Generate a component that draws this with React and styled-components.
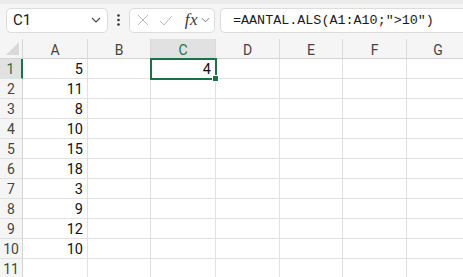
import React from "react";
import styled, { createGlobalStyle } from "styled-components";

const GlobalStyle = createGlobalStyle`
  html, body {
    margin: 0;
    padding: 0;
    background: #f5f5f5;
    overflow: hidden;
  }
  body {
    font-family: Roboto, "Liberation Sans", sans-serif;
  }
`;

const GREEN = "#1e7145";
const GRID = "#e1e1e1";

const columns = [
  { name: "A", width: 65 },
  { name: "B", width: 63 },
  { name: "C", width: 65 },
  { name: "D", width: 64 },
  { name: "E", width: 63 },
  { name: "F", width: 64 },
  { name: "G", width: 63 },
];

const values = [5, 11, 8, 10, 15, 18, 3, 9, 12, 10, null];

const Page = styled.div`
  width: 463px;
  height: 277px;
  overflow: hidden;
  display: flex;
  flex-direction: column;
`;

const TopStrip = styled.div`
  height: 4px;
  flex: none;
  background: #ebebeb;
`;

const FormulaBar = styled.div`
  display: flex;
  align-items: center;
  flex: none;
  height: 35px;
  padding: 0 0 3px 6px;
  box-sizing: border-box;
`;

const Box = styled.div`
  display: flex;
  align-items: center;
  height: 25px;
  box-sizing: border-box;
  background: #ffffff;
  border: 1px solid #dcdcdc;
  border-radius: 5px;
`;

const NameBox = styled(Box)`
  width: 102px;
  padding: 0 6px 0 6px;
  justify-content: space-between;
  font-family: Roboto, "Liberation Sans", sans-serif;
  font-size: 15px;
  color: #1b1b1b;
`;

const Dots = styled.div`
  width: 21px;
  display: flex;
  justify-content: center;
`;

const FxBox = styled(Box)`
  width: 86px;
  padding: 0 4px 0 7px;
`;

const FxLabel = styled.span`
  font-family: "Liberation Serif", serif;
  font-style: italic;
  font-size: 17px;
  color: #3a3a3a;
  margin-left: 12px;
  letter-spacing: 0.5px;
`;

const FxChevron = styled.span`
  display: flex;
  margin-left: 3px;
`;

const FormulaBox = styled(Box)`
  flex: 1;
  margin-left: 5px;
  border-right: none;
  border-radius: 5px 0 0 5px;
  padding-left: 12px;
  font-family: "Liberation Mono", monospace;
  font-size: 13.4px;
  color: #1b1b1b;
`;

const Grid = styled.div`
  display: flex;
  flex-direction: column;
  background: #ffffff;
`;

const Row = styled.div`
  display: flex;
  flex: none;
  height: ${(p) => p.$h}px;
`;

const Corner = styled.div`
  width: 23px;
  flex: none;
  box-sizing: border-box;
  background: #f5f5f5;
  border-right: 1px solid #d4d4d4;
  border-bottom: 1px solid #d4d4d4;
  display: flex;
  align-items: flex-end;
  justify-content: flex-end;
  padding: 0 3px 3px 0;
`;

const ColHeader = styled.div`
  width: ${(p) => p.$w}px;
  flex: none;
  box-sizing: border-box;
  background: ${(p) => (p.$active ? "#e1e1e1" : "#f5f5f5")};
  border-right: 1px solid #dadada;
  border-bottom: 1px solid #d4d4d4;
  display: flex;
  align-items: center;
  justify-content: center;
  font-size: 14px;
  color: ${(p) => (p.$active ? GREEN : "#444444")};
  padding-top: 2px;
`;

const RowHeader = styled.div`
  width: 23px;
  flex: none;
  box-sizing: border-box;
  background: ${(p) => (p.$active ? "#e1e1e1" : "#f5f5f5")};
  border-right: ${(p) => (p.$active ? `2px solid ${GREEN}` : "1px solid #d4d4d4")};
  border-bottom: 1px solid ${GRID};
  display: flex;
  align-items: center;
  justify-content: center;
  padding-top: 1px;
  font-size: 14px;
  color: ${(p) => (p.$active ? GREEN : "#444444")};
`;

const Cell = styled.div`
  position: relative;
  width: ${(p) => p.$w}px;
  flex: none;
  box-sizing: border-box;
  border-right: 1px solid ${GRID};
  border-bottom: 1px solid ${GRID};
  display: flex;
  align-items: center;
  justify-content: flex-end;
  padding: 1px 4px 0 0;
  font-size: 14.5px;
  color: #111111;
  ${(p) =>
    p.$selected &&
    `
    border-right-color: ${GREEN};
    border-bottom-color: ${GREEN};
    box-shadow: 0 0 0 1px ${GREEN}, inset 1px 1px 0 0 ${GREEN};
    z-index: 1;
  `}
`;

const FillHandle = styled.span`
  position: absolute;
  right: -4px;
  bottom: -4px;
  width: 5px;
  height: 5px;
  background: ${GREEN};
  border: 1px solid #ffffff;
`;

const Chevron = () => (
  <svg width="10" height="6" viewBox="0 0 10 6">
    <path d="M1 1 L5 5 L9 1" fill="none" stroke="#444" strokeWidth="1.1" />
  </svg>
);

const App = () => {
  return (
    <Page>
      <GlobalStyle />
      <TopStrip />
      <FormulaBar>
        <NameBox>
          <span>C1</span>
          <Chevron />
        </NameBox>
        <Dots>
          <svg width="3" height="12" viewBox="0 0 3 12">
            <circle cx="1.5" cy="1.5" r="1.3" fill="#333" />
            <circle cx="1.5" cy="6" r="1.3" fill="#333" />
            <circle cx="1.5" cy="10.5" r="1.3" fill="#333" />
          </svg>
        </Dots>
        <FxBox>
          <svg width="12" height="12" viewBox="0 0 12 12">
            <path d="M1 1 L11 11 M11 1 L1 11" stroke="#b4b4b4" strokeWidth="1" fill="none" />
          </svg>
          <svg width="14" height="11" viewBox="0 0 14 11" style={{ marginLeft: 10 }}>
            <path d="M1 6 L5 10 L13 1" stroke="#b4b4b4" strokeWidth="1" fill="none" />
          </svg>
          <FxLabel>fx</FxLabel>
          <FxChevron>
            <svg width="9" height="6" viewBox="0 0 10 6">
              <path d="M1 1 L5 5 L9 1" fill="none" stroke="#777" strokeWidth="1.1" />
            </svg>
          </FxChevron>
        </FxBox>
        <FormulaBox>=AANTAL.ALS(A1:A10;"&gt;10")</FormulaBox>
      </FormulaBar>
      <Grid>
        <Row $h={20}>
          <Corner>
            <svg width="13" height="13" viewBox="0 0 13 13">
              <path d="M13 0 L13 13 L0 13 Z" fill="#d9d9d9" />
            </svg>
          </Corner>
          {columns.map((c) => (
            <ColHeader key={c.name} $w={c.width} $active={c.name === "C"}>
              {c.name}
            </ColHeader>
          ))}
        </Row>
        {values.map((v, i) => (
          <Row key={i} $h={20}>
            <RowHeader $active={i === 0}>{i + 1}</RowHeader>
            {columns.map((c) => (
              <Cell key={c.name} $w={c.width} $selected={i === 0 && c.name === "C"}>
                {c.name === "A" && v}
                {i === 0 && c.name === "C" && (
                  <>
                    4
                    <FillHandle />
                  </>
                )}
              </Cell>
            ))}
          </Row>
        ))}
      </Grid>
    </Page>
  );
};

export default App;
